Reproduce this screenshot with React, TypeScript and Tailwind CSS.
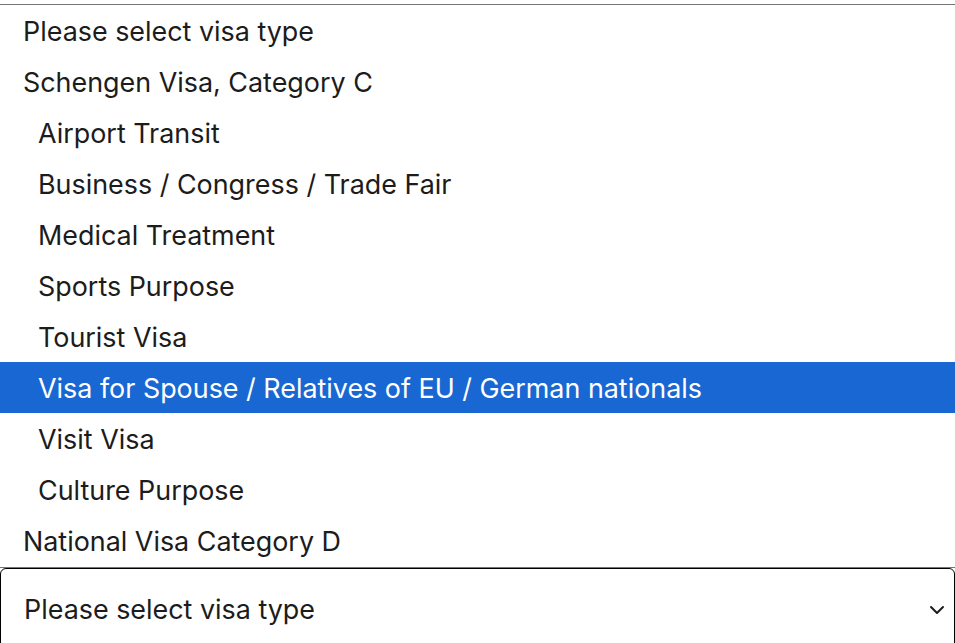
import { ChevronDown } from 'lucide-react';

const options = [
  { label: 'Please select visa type', indent: false },
  { label: 'Schengen Visa, Category C', indent: false },
  { label: 'Airport Transit', indent: true },
  { label: 'Business / Congress / Trade Fair', indent: true },
  { label: 'Medical Treatment', indent: true },
  { label: 'Sports Purpose', indent: true },
  { label: 'Tourist Visa', indent: true },
  { label: 'Visa for Spouse / Relatives of EU / German nationals', indent: true, active: true },
  { label: 'Visit Visa', indent: true },
  { label: 'Culture Purpose', indent: true },
  { label: 'National Visa Category D', indent: false },
];

export default function App() {
  return (
    <main className="h-[643px] w-[955px] overflow-hidden bg-white pt-1 font-['Inter',sans-serif] text-[26.9px] text-[#1c1c1c]">
      <ul className="border-y border-[#767676] pb-px">
        {options.map((o) => (
          <li
            key={o.label}
            className={`flex h-[51px] items-center pt-px ${o.indent ? 'pl-[38px]' : 'pl-[23px]'} ${
              o.active ? 'bg-[#1967d2] text-white' : ''
            }`}
          >
            {o.label}
          </li>
        ))}
      </ul>
      <div className="flex h-[82px] items-center justify-between rounded-md border border-black pl-[23px] pr-[5px] pt-px">
        <span>Please select visa type</span>
        <ChevronDown className="h-6 w-6" strokeWidth={2} />
      </div>
    </main>
  );
}
